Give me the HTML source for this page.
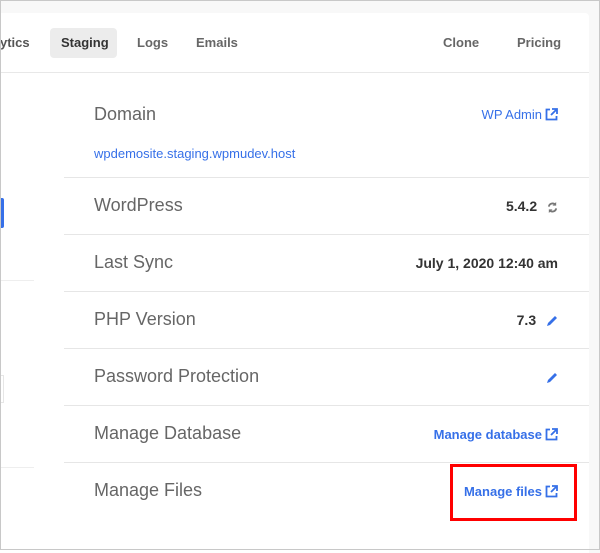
<!DOCTYPE html>
<html><head><style>
*{margin:0;padding:0;box-sizing:border-box}
body{width:600px;height:550px;background:#f8f8f8;font-family:"Liberation Sans",sans-serif;position:relative;overflow:hidden}
.bd{position:absolute;left:0;top:0;width:600px;height:550px;border:1px solid #c8c8c8;z-index:5}
.card{position:absolute;left:0;top:13px;width:589px;height:540px;background:#fff;border-radius:0 4px 0 0}
.nav{position:absolute;top:0;left:0;right:0;height:60px;border-bottom:1px solid #e8e8e8}
.nav span{position:absolute;top:22px;font-size:13px;font-weight:bold;color:#666}
.pill{position:absolute;left:50px;top:15px;width:67px;height:30px;background:#ececec;border-radius:4px}
.row{position:absolute;left:64px;width:525px;border-top:1px solid #e6e6e6}
.lab{position:absolute;left:94px;font-size:18px;color:#666}
.val{position:absolute;right:42px;font-size:14px;font-weight:bold;color:#333}
.lnk{position:absolute;right:42px;font-size:13px;color:#3670e8;font-weight:bold}
svg{vertical-align:-2px;margin-left:3px}
</style></head><body>
<div class="card">
<div class="nav">
<div class="pill"></div>
<span style="left:0px;color:#555">ytics</span>
<span style="left:61px;color:#333">Staging</span>
<span style="left:137px">Logs</span>
<span style="left:196px">Emails</span>
<span style="left:443px">Clone</span>
<span style="left:517px">Pricing</span>
</div>
</div>
<div style="position:absolute;left:0;top:198px;width:4px;height:30px;background:#3670e8;border-radius:0 2px 2px 0"></div>
<div style="position:absolute;left:0;top:280px;width:34px;border-top:1px solid #eee"></div>
<div style="position:absolute;left:0;top:375px;width:4px;height:28px;border:1px solid #e6e6e6;border-left:none"></div>
<div style="position:absolute;left:0;top:467px;width:34px;border-top:1px solid #eee"></div>

<div class="lab" style="top:104px">Domain</div>
<div class="lnk" style="top:107px;font-weight:normal">WP Admin<svg width="13" height="13" viewBox="0 0 13 13"><path d="M5 1.5H1.5v10h10V8M7 1h5v5M12 1L6 7" fill="none" stroke="#3670e8" stroke-width="1.8"/></svg></div>
<div style="position:absolute;left:94px;top:146px;font-size:13px;color:#3670e8">wpdemosite.staging.wpmudev.host</div>

<div class="row" style="top:177px"></div>
<div class="lab" style="top:195px">WordPress</div>
<div class="val" style="top:198px">5.4.2 <svg width="11" height="11" viewBox="0 0 12 12" style="margin-left:6px"><path d="M2 5a4 4 0 0 1 7-2M10 7a4 4 0 0 1-7 2" fill="none" stroke="#777" stroke-width="2"/><path d="M10 0v4H6zM2 12V8h4z" fill="#777"/></svg></div>
<div class="row" style="top:234px"></div>
<div class="lab" style="top:252px">Last Sync</div>
<div class="val" style="top:255px">July 1, 2020 12:40 am</div>
<div class="row" style="top:291px"></div>
<div class="lab" style="top:309px">PHP Version</div>
<div class="val" style="top:312px">7.3 <svg width="12" height="12" viewBox="0 0 12 12" style="margin-left:6px"><path d="M1 11l1-3 7-7 2 2-7 7z" fill="#3670e8"/></svg></div>
<div class="row" style="top:348px"></div>
<div class="lab" style="top:366px">Password Protection</div>
<div class="val" style="top:369px"><svg width="12" height="12" viewBox="0 0 12 12"><path d="M1 11l1-3 7-7 2 2-7 7z" fill="#3670e8"/></svg></div>
<div class="row" style="top:405px"></div>
<div class="lab" style="top:423px">Manage Database</div>
<div class="lnk" style="top:427px">Manage database<svg width="13" height="13" viewBox="0 0 13 13"><path d="M5 1.5H1.5v10h10V8M7 1h5v5M12 1L6 7" fill="none" stroke="#3670e8" stroke-width="1.8"/></svg></div>
<div class="row" style="top:462px"></div>
<div class="lab" style="top:480px">Manage Files</div>
<div class="lnk" style="top:484px">Manage files<svg width="13" height="13" viewBox="0 0 13 13"><path d="M5 1.5H1.5v10h10V8M7 1h5v5M12 1L6 7" fill="none" stroke="#3670e8" stroke-width="1.8"/></svg></div>
<div style="position:absolute;left:450px;top:464px;width:127px;height:57px;border:3px solid #f00"></div>
<div class="bd"></div>
</body></html>
